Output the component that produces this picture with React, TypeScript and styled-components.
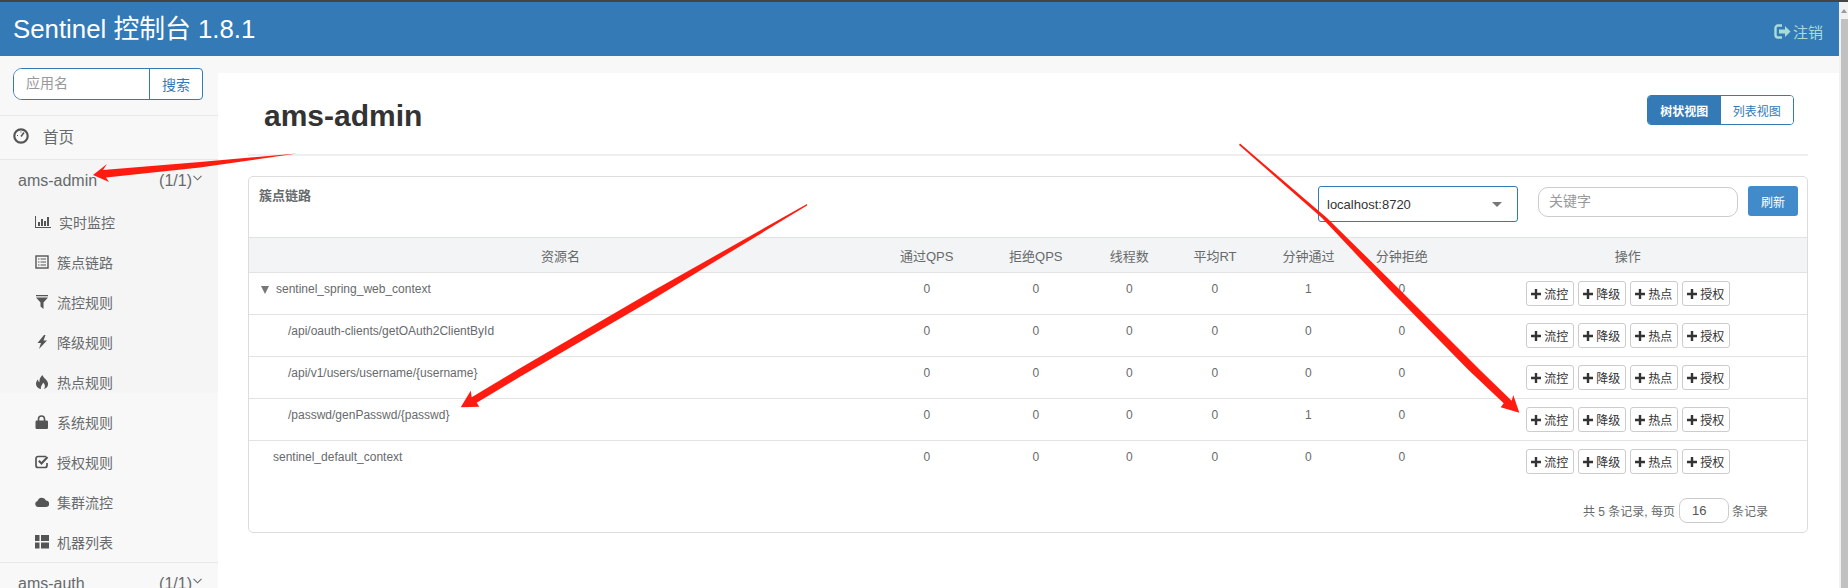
import React from 'react';
import styled, { createGlobalStyle } from 'styled-components';

const FONT = `"Liberation Sans", "Noto Sans CJK SC", Arial, sans-serif`;

const GlobalStyle = createGlobalStyle`
  html, body {
    margin: 0;
    padding: 0;
    width: 1848px;
    height: 588px;
    overflow: hidden;
    background: #fff;
    font-family: ${FONT};
    color: #676a6c;
  }
  * { box-sizing: border-box; }
  input { font-family: ${FONT}; }
`;

const DashboardIcon = () => (
  <svg width="16" height="16" viewBox="0 0 16 16" fill="none" stroke="currentColor">
    <circle cx="8" cy="8" r="6.700" strokeWidth="2.200" />
    <path d="M8 8.500 11 4.500" strokeWidth="1.500" />
    <path d="M4 7.500h1M8 3.500v1" strokeWidth="1" />
  </svg>
);

const ChartIcon = () => (
  <svg width="16" height="12" viewBox="0 0 16 12" fill="currentColor">
    <path d="M0 0h1v11h15v1H0z" />
    <rect x="3" y="6" width="2" height="4" />
    <rect x="6" y="3" width="2" height="7" />
    <rect x="9" y="5" width="2" height="5" />
    <rect x="12" y="1" width="2" height="9" />
  </svg>
);

const ListIcon = () => (
  <svg width="14" height="14" viewBox="0 0 14 14" fill="none" stroke="currentColor">
    <rect x="1" y="1" width="12" height="12" strokeWidth="1.400" />
    <path d="M3 4h1.500M5.500 4H11M3 7h1.500M5.500 7H11M3 10h1.500M5.500 10H11" strokeWidth="1" />
  </svg>
);

const FilterIcon = () => (
  <svg width="14" height="14" viewBox="0 0 14 14" fill="currentColor">
    <path d="M1 0h12v1.200H1zM1 2.500h12L8.500 7.500V14l-3-2.500v-4z" />
  </svg>
);

const BoltIcon = () => (
  <svg width="14" height="14" viewBox="0 0 14 14" fill="currentColor">
    <path d="M9 0 2.500 8h3.500L4 14 12 5.500H8.500L10.500 0z" />
  </svg>
);

const FireIcon = () => (
  <svg width="14" height="14" viewBox="0 0 14 14" fill="currentColor">
    <path d="M7.500 0c.5 3 5 4.500 5.500 8.500.3 3-1.800 5-4 5.500 1.500-2 1.300-4.500-1-6.500C8 9.500 5.300 10.500 6 14c-3-.3-5-2.500-5-5 0-2 .8-3.500 2-4.500 0 1.500.5 2.300 1.500 2.800C4 4.500 5.500 2 7.500 0z" />
  </svg>
);

const LockIcon = () => (
  <svg width="14" height="14" viewBox="0 0 14 14" fill="currentColor">
    <path d="M3.500 6V4a3 3 0 0 1 6 0v2" fill="none" stroke="currentColor" strokeWidth="1.600" />
    <rect x="0.500" y="5.500" width="12.500" height="8.500" rx="1.200" />
  </svg>
);

const CheckIcon = () => (
  <svg width="14" height="14" viewBox="0 0 14 14" fill="none" stroke="currentColor">
    <path d="M11 1.500H3A2 2 0 0 0 1 3.500v7a2 2 0 0 0 2 2h7a2 2 0 0 0 2-2V8" strokeWidth="1.700" />
    <path d="M3.800 5.800 6.500 8.500 12.500 2" strokeWidth="2.200" />
  </svg>
);

const CloudIcon = () => (
  <svg width="14" height="14" viewBox="0 0 14 14" fill="currentColor">
    <path d="M3 12a3 3 0 0 1-.5-5.900A4.500 4.500 0 0 1 11 5.600 3.200 3.200 0 0 1 11 12z" />
  </svg>
);

const GridIcon = () => (
  <svg width="14" height="14" viewBox="0 0 14 14" fill="currentColor">
    <rect x="0" y="0" width="4.500" height="6" />
    <rect x="6" y="0" width="8" height="6" />
    <rect x="0" y="7.500" width="4.500" height="6" />
    <rect x="6" y="7.500" width="8" height="6" />
  </svg>
);

const LogoutIcon = () => (
  <svg width="17" height="15" viewBox="0 0 17 15" fill="none" stroke="currentColor">
    <path d="M8 1.500H4A2.500 2.500 0 0 0 1.500 4v7A2.500 2.500 0 0 0 4 13.500h4" strokeWidth="2.400" />
    <path d="M5 5.500h6V2l5.500 5.500L11 13V9.500H5z" fill="currentColor" stroke="none" />
  </svg>
);

const PlusIcon = () => (
  <svg width="10" height="10" viewBox="0 0 10 10" fill="currentColor">
    <path d="M3.800 0h2.400v3.800H10v2.400H6.200V10H3.800V6.200H0V3.800h3.800z" />
  </svg>
);

const Chevron = () => (
  <svg width="9" height="6" viewBox="0 0 9 6" fill="none" stroke="currentColor">
    <path d="M.5 .8 4.500 4.800 8.500 .8" strokeWidth="1.100" />
  </svg>
);

const Page = styled.div`
  position: relative;
  width: 1848px;
  height: 588px;
  overflow: hidden;
  border-top: 2px solid #444;
  display: flex;
`;

const Main = styled.div`
  flex: 1;
  min-width: 0;
  display: flex;
  flex-direction: column;
`;

const Header = styled.header`
  height: 54px;
  flex: none;
  background: #337ab7;
  display: flex;
  align-items: center;
  justify-content: space-between;
  padding: 0 16px 6px 13px;
`;

const Brand = styled.div`
  color: #fff;
  font-size: 25.800px;
`;

const Logout = styled.div`
  color: #a9dcd6;
  font-size: 15px;
  display: flex;
  align-items: center;
  gap: 2px;
  margin-top: 10px;
`;

const Body = styled.div`
  flex: 1;
  display: flex;
  min-height: 0;
`;

const Sidebar = styled.aside`
  width: 218px;
  flex: none;
  background: #f8f8f8;
`;

const SearchBlock = styled.div`
  height: 60px;
  padding: 12px 0 0 13px;
  border-bottom: 1px solid #e7e7e7;
`;

const SearchGroup = styled.div`
  width: 190px;
  height: 32px;
  display: flex;
  border: 1px solid #337ab7;
  border-radius: 9px 4px 4px 9px;
  overflow: hidden;
  background: #fff;
`;

const SearchInput = styled.input`
  width: 135px;
  border: 0;
  outline: 0;
  padding: 0 0 2px 12px;
  font-size: 14px;
  background: #fff;
  &::placeholder { color: #999; opacity: 1; }
`;

const SearchButton = styled.div`
  flex: 1;
  border-left: 1px solid #337ab7;
  color: #337ab7;
  font-size: 14px;
  display: flex;
  align-items: center;
  justify-content: center;
`;

const HomeRow = styled.div`
  height: 44px;
  padding: 0 0 3px 13px;
  border-bottom: 1px solid #e7e7e7;
  display: flex;
  align-items: center;
  gap: 14px;
  font-size: 15.500px;
  color: #676a6c;
  svg { color: #555; }
`;

const NavGroup = styled.div`
  height: 403px;
  border-bottom: 1px solid #e7e7e7;
  background: linear-gradient(#f5f5f5 0 233px, #f8f8f8 233px);
`;

const GroupTitle = styled.div`
  height: 43px;
  padding: 0 16px 2px 18px;
  display: flex;
  align-items: center;
  font-size: 16px;
  color: #676a6c;
`;

const GroupName = styled.span`
  flex: 1;
`;

const GroupCount = styled.span`
  margin-right: 1px;
`;

const GroupChevron = styled.span`
  display: flex;
  margin-bottom: 6px;
`;

const NavItem = styled.div`
  height: 40px;
  padding: 0 0 2px 35px;
  display: flex;
  align-items: center;
  gap: 8px;
  font-size: 14px;
  color: #676a6c;
  svg { color: #555; flex: none; }
`;

const Outer = styled.div`
  flex: 1;
  background: #f8f8f8;
  display: flex;
  min-width: 0;
`;

const Content = styled.main`
  flex: 1;
  margin-top: 17px;
  background: #fff;
  padding: 0 31px 0 30px;
`;

const TitleRow = styled.div`
  height: 83px;
  border-bottom: 2px solid #eee;
  display: flex;
  justify-content: space-between;
  padding: 22px 14px 0 16px;
`;

const PageTitle = styled.h2`
  margin: 3px 0 0;
  font-size: 30px;
  font-weight: 700;
  line-height: 36px;
  color: #333;
`;

const ViewSwitch = styled.div`
  display: flex;
  height: 30px;
  width: 147px;
  border: 1px solid #337ab7;
  border-radius: 4px;
  overflow: hidden;
`;

const ViewButton = styled.div<{ $active?: boolean }>`
  flex: 1;
  display: flex;
  align-items: center;
  justify-content: center;
  font-size: 12px;
  font-weight: ${(p) => (p.$active ? 700 : 400)};
  color: ${(p) => (p.$active ? '#fff' : '#337ab7')};
  background: ${(p) => (p.$active ? '#337ab7' : '#fff')};
`;

const Panel = styled.section`
  margin-top: 20px;
  border: 1px solid #ddd;
  border-radius: 5px;
  background: #fff;
`;

const PanelHead = styled.div`
  height: 60px;
  display: flex;
  align-items: flex-start;
  padding: 9px 9px 0 10px;
`;

const PanelTitle = styled.div`
  margin-right: auto;
  font-size: 13px;
  font-weight: 700;
  line-height: 20px;
  color: #676a6c;
`;

const MachineSelect = styled.div`
  width: 200px;
  height: 36px;
  border: 1px solid #337ab7;
  border-radius: 3px;
  padding-left: 8px;
  display: flex;
  align-items: center;
  justify-content: space-between;
  font-size: 13px;
  color: #333;
`;

const Caret = styled.span`
  width: 0;
  height: 0;
  margin: 0 15px 0 0;
  border-left: 5px solid transparent;
  border-right: 5px solid transparent;
  border-top: 5px solid #777;
`;

const KeywordInput = styled.input`
  width: 200px;
  height: 30px;
  margin: 1px 10px 0 20px;
  padding: 0 0 2px 10px;
  border: 1px solid #ccc;
  border-radius: 10px;
  outline: 0;
  font-size: 14px;
  &::placeholder { color: #999; opacity: 1; }
`;

const RefreshButton = styled.div`
  width: 50px;
  height: 30px;
  border-radius: 3px;
  background: #428bca;
  color: #fff;
  font-size: 12px;
  display: flex;
  align-items: center;
  justify-content: center;
`;

const Table = styled.table`
  width: 100%;
  table-layout: fixed;
  border-collapse: collapse;
  font-size: 12px;
`;

const HeadCell = styled.th<{ $w: number }>`
  width: ${(p) => p.$w}%;
  height: 35px;
  padding: 0;
  background: #f3f4f5;
  border-top: 1px solid #e2e2e2;
  border-bottom: 1px solid #e2e2e2;
  font-size: 13px;
  font-weight: 400;
  color: #676a6c;
  text-align: center;
`;

const Row = styled.tr`
  height: 42px;
  border-bottom: 1px solid #e2e2e2;
  &:last-child { border-bottom: 0; }
`;

const NameCell = styled.td<{ $indent: number }>`
  padding: 7px 0 0 ${(p) => p.$indent}px;
  vertical-align: top;
  line-height: 18px;
  color: #676a6c;
`;

const Toggle = styled.span`
  display: inline-block;
  width: 0;
  height: 0;
  margin: 0 7px 0 0;
  vertical-align: -1px;
  border-left: 4.500px solid transparent;
  border-right: 4.500px solid transparent;
  border-top: 8px solid #777;
`;

const NumCell = styled.td`
  padding: 7px 0 0;
  vertical-align: top;
  line-height: 18px;
  text-align: center;
  color: #676a6c;
`;

const ActionCell = styled.td`
  padding: 0;
  vertical-align: top;
`;

const Actions = styled.div`
  display: flex;
  justify-content: center;
  gap: 4px;
  padding-top: 8px;
`;

const ActionButton = styled.div`
  width: 48px;
  height: 25px;
  border: 1px solid #ccc;
  border-radius: 3px;
  background: #fff;
  color: #333;
  font-size: 12px;
  display: flex;
  align-items: center;
  justify-content: center;
  gap: 3px;
`;

const Pager = styled.div`
  display: flex;
  align-items: center;
  justify-content: flex-end;
  gap: 3px;
  height: 25px;
  margin: 15px 39px 9px 0;
  font-size: 12px;
  color: #676a6c;
`;

const PageSize = styled.input`
  width: 50px;
  height: 25px;
  margin-left: 1px;
  padding: 0 0 0 12px;
  border: 1px solid #ccc;
  border-radius: 8px;
  outline: 0;
  font-size: 13px;
  color: #555;
`;

const Scrollbar = styled.div`
  width: 9px;
  flex: none;
  background: #f1f1f1;
  display: flex;
  flex-direction: column;
  padding-left: 2px;
`;

const ScrollArrow = styled.span`
  width: 0;
  height: 0;
  margin: 7px 0 6px 0;
  border-left: 3.500px solid transparent;
  border-right: 3.500px solid transparent;
  border-bottom: 4px solid #9a9a9a;
`;

const ScrollThumb = styled.div`
  flex: 1;
  background: #c1c1c1;
`;

const Arrows = styled.svg`
  position: absolute;
  left: 0;
  top: -2px;
  pointer-events: none;
`;

const navItems: [React.ReactNode, string][] = [
  [<ChartIcon />, '实时监控'],
  [<ListIcon />, '簇点链路'],
  [<FilterIcon />, '流控规则'],
  [<BoltIcon />, '降级规则'],
  [<FireIcon />, '热点规则'],
  [<LockIcon />, '系统规则'],
  [<CheckIcon />, '授权规则'],
  [<CloudIcon />, '集群流控'],
  [<GridIcon />, '机器列表'],
];

const columns: [string, number][] = [
  ['资源名', 40],
  ['通过QPS', 7],
  ['拒绝QPS', 7],
  ['线程数', 5],
  ['平均RT', 6],
  ['分钟通过', 6],
  ['分钟拒绝', 6],
  ['操作', 23],
];

const rows = [
  { name: 'sentinel_spring_web_context', indent: 12, toggle: true, pass: 1 },
  { name: '/api/oauth-clients/getOAuth2ClientById', indent: 39, pass: 0 },
  { name: '/api/v1/users/username/{username}', indent: 39, pass: 0 },
  { name: '/passwd/genPasswd/{passwd}', indent: 39, pass: 1 },
  { name: 'sentinel_default_context', indent: 24, pass: 0 },
];

const actions = ['流控', '降级', '热点', '授权'];

export default function App() {
  return (
    <>
      <GlobalStyle />
      <Page>
        <Main>
          <Header>
            <Brand>Sentinel 控制台 1.8.1</Brand>
            <Logout>
              <LogoutIcon />
              注销
            </Logout>
          </Header>
          <Body>
            <Sidebar>
              <SearchBlock>
                <SearchGroup>
                  <SearchInput placeholder="应用名" readOnly />
                  <SearchButton>搜索</SearchButton>
                </SearchGroup>
              </SearchBlock>
              <HomeRow>
                <DashboardIcon />
                首页
              </HomeRow>
              <NavGroup>
                <GroupTitle>
                  <GroupName>ams-admin</GroupName>
                  <GroupCount>(1/1)</GroupCount>
                  <GroupChevron>
                    <Chevron />
                  </GroupChevron>
                </GroupTitle>
                {navItems.map(([icon, label]) => (
                  <NavItem key={label}>
                    {icon}
                    {label}
                  </NavItem>
                ))}
              </NavGroup>
              <GroupTitle>
                <GroupName>ams-auth</GroupName>
                <GroupCount>(1/1)</GroupCount>
                <GroupChevron>
                  <Chevron />
                </GroupChevron>
              </GroupTitle>
            </Sidebar>
            <Outer>
              <Content>
                <TitleRow>
                  <PageTitle>ams-admin</PageTitle>
                  <ViewSwitch>
                    <ViewButton $active>树状视图</ViewButton>
                    <ViewButton>列表视图</ViewButton>
                  </ViewSwitch>
                </TitleRow>
                <Panel>
                  <PanelHead>
                    <PanelTitle>簇点链路</PanelTitle>
                    <MachineSelect>
                      localhost:8720
                      <Caret />
                    </MachineSelect>
                    <KeywordInput placeholder="关键字" readOnly />
                    <RefreshButton>刷新</RefreshButton>
                  </PanelHead>
                  <Table>
                    <thead>
                      <tr>
                        {columns.map(([label, w]) => (
                          <HeadCell key={label} $w={w}>
                            {label}
                          </HeadCell>
                        ))}
                      </tr>
                    </thead>
                    <tbody>
                      {rows.map((row) => (
                        <Row key={row.name}>
                          <NameCell $indent={row.indent}>
                            {row.toggle && <Toggle />}
                            {row.name}
                          </NameCell>
                          <NumCell>0</NumCell>
                          <NumCell>0</NumCell>
                          <NumCell>0</NumCell>
                          <NumCell>0</NumCell>
                          <NumCell>{row.pass}</NumCell>
                          <NumCell>0</NumCell>
                          <ActionCell>
                            <Actions>
                              {actions.map((a) => (
                                <ActionButton key={a}>
                                  <PlusIcon />
                                  {a}
                                </ActionButton>
                              ))}
                            </Actions>
                          </ActionCell>
                        </Row>
                      ))}
                    </tbody>
                  </Table>
                  <Pager>
                    共 5 条记录, 每页
                    <PageSize defaultValue="16" readOnly />
                    条记录
                  </Pager>
                </Panel>
              </Content>
            </Outer>
          </Body>
        </Main>
        <Scrollbar>
          <ScrollArrow />
          <ScrollThumb />
        </Scrollbar>
        <Arrows width="1848" height="588" viewBox="0 0 1848 588" fill="#fe1c10">
          <polygon points="297,153.500 200,162 103,170 107,164 93,175 109,182 106,177.500 200,167.500" />
          <polygon points="807,204 650,292.500 520,368.300 471.700,397.300 470.700,390.700 460.700,407.300 479.300,406.700 476.700,402.700 520,376.700 650,301 807,205.500" />
          <polygon points="1240,143.500 1327,218 1398,288 1480,370 1511.700,400.700 1513.300,395 1519.300,412.700 1500.700,407.300 1503.700,403.300 1468.500,370 1388,288 1322,218 1239,145" />
        </Arrows>
      </Page>
    </>
  );
}
